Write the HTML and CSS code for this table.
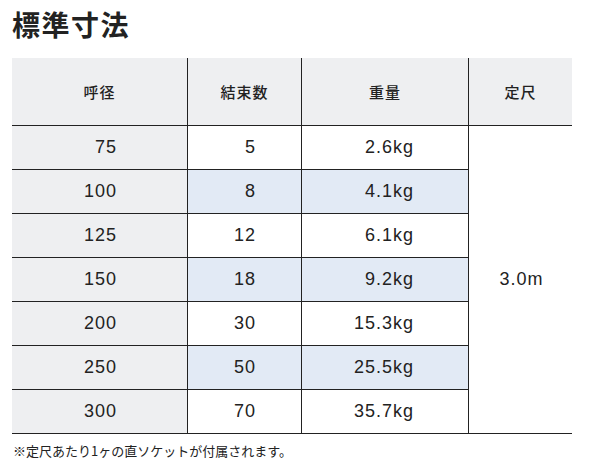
FILE: index.html
```html
<!DOCTYPE html>
<html lang="ja">
<head>
<meta charset="utf-8">
<link rel="stylesheet" href="styles.css">
</head>
<body>
<h1 class="title">標準寸法</h1>
<table class="spec">
  <thead>
    <tr>
      <th class="c1">呼径</th>
      <th class="c2">結束数</th>
      <th class="c3">重量</th>
      <th class="c4">定尺</th>
    </tr>
  </thead>
  <tbody>
    <tr><td class="c1">75</td><td class="c2">5</td><td class="c3">2.6kg</td><td class="c4" rowspan="7">3.0m</td></tr>
    <tr class="alt"><td class="c1">100</td><td class="c2">8</td><td class="c3">4.1kg</td></tr>
    <tr><td class="c1">125</td><td class="c2">12</td><td class="c3">6.1kg</td></tr>
    <tr class="alt"><td class="c1">150</td><td class="c2">18</td><td class="c3">9.2kg</td></tr>
    <tr><td class="c1">200</td><td class="c2">30</td><td class="c3">15.3kg</td></tr>
    <tr class="alt"><td class="c1">250</td><td class="c2">50</td><td class="c3">25.5kg</td></tr>
    <tr><td class="c1">300</td><td class="c2">70</td><td class="c3">35.7kg</td></tr>
  </tbody>
</table>
<p class="note">※定尺あたり1ヶの直ソケットが付属されます。</p>
</body>
</html>
```
FILE: styles.css
```css
html, body {
  margin: 0;
  padding: 0;
  background: #ffffff;
}
body {
  padding: 4px 12px 0 12px;
  color: #222222;
  font-family: "Noto Sans CJK JP", "Liberation Sans", sans-serif;
}
.title {
  margin: 0 0 14px 0;
  font-size: 28px;
  line-height: 40px;
  font-weight: 700;
  letter-spacing: 1.5px;
}
.spec {
  border-collapse: collapse;
  table-layout: fixed;
  width: 560px;
}
.spec th {
  height: 67px;
  padding: 0;
  background: #eeeff1;
  font-family: "Noto Sans CJK JP", sans-serif;
  font-size: 15px;
  font-weight: 500;
  letter-spacing: 1px;
  text-align: center;
  border-bottom: 1px solid #222;
}
.spec td {
  height: 43px;
  padding: 0;
  font-family: "Liberation Sans", "Noto Sans CJK JP", sans-serif;
  font-size: 18px;
  letter-spacing: 1px;
  text-align: right;
  border-bottom: 1px solid #222;
  background: #ffffff;
}
.spec .c1 { width: 175px; border-right: 1px solid #222; }
.spec .c2 { width: 113px; border-right: 1px solid #222; }
.spec .c3 { width: 166px; border-right: 1px solid #222; }
.spec .c4 { width: 103px; }
.spec th.c1, .spec th.c2, .spec th.c3, .spec th.c4 { text-align: center; }
.spec td.c1 { background: #eeeff1; padding-right: 70px; }
.spec td.c2 { padding-right: 45px; }
.spec td.c3 { padding-right: 54px; }
.spec td.c4 { text-align: center; padding-left: 2px; }
.spec tr.alt td.c2, .spec tr.alt td.c3 { background: #e2eaf5; }
.note {
  margin: 6px 0 0 1px;
  font-size: 13px;
  line-height: 22px;
}
```
